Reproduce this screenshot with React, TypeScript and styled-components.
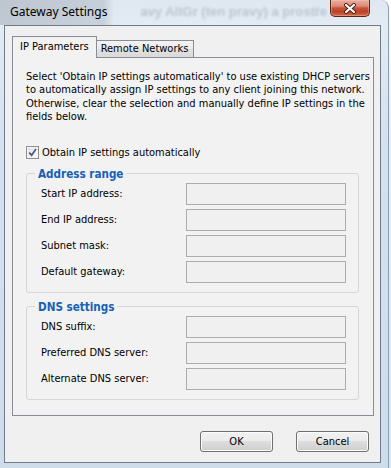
import React from "react";
import styled, { createGlobalStyle } from "styled-components";

const UI_FONT = `"DejaVu Sans Condensed", "Liberation Sans", sans-serif`;

const GlobalStyle = createGlobalStyle`
  html, body { margin: 0; padding: 0; background: #eef3f9; }
  body { font-family: ${UI_FONT}; font-size: 11px; color: #000; }
  * { box-sizing: border-box; }
`;

const Desktop = styled.div`
  width: 391px;
  height: 468px;
  overflow: hidden;
  background: linear-gradient(180deg, #ffffff 0%, #e6eef8 25%, #dbe7f4 100%);
`;

const Window = styled.div`
  width: 389px;
  height: 468px;
  display: flex;
  flex-direction: column;
  padding: 0 7px 5px 4px;
  border-right: 1px solid #8b9db1;
  border-top-right-radius: 8px;
  background:
    linear-gradient(90deg, rgba(110, 120, 135, 0.3) 0, rgba(110, 120, 135, 0.22) 104px, rgba(110, 120, 135, 0) 114px) 0 0 / 100% 25px no-repeat,
    linear-gradient(180deg, #dfe7f0 0%, #e3ebf4 6%, #d4e1ee 30%, #cfdcea 100%);
`;

const TitleBar = styled.div`
  height: 25px;
  flex: none;
  display: flex;
  align-items: flex-start;
  padding-left: 6px;
`;

const Title = styled.div`
  font-family: "Noto Sans", "Open Sans", sans-serif;
  font-size: 12px;
  line-height: 24px;
  color: #000;
  white-space: nowrap;
`;

const GlassText = styled.div`
  flex: none;
  white-space: nowrap;
  margin-left: 33px;
  font-family: "Liberation Sans", sans-serif;
  font-weight: bold;
  font-size: 13px;
  line-height: 24px;
  color: rgba(50, 70, 100, 0.22);
  filter: blur(1.2px);
`;

const CloseButton = styled.div`
  width: 40px;
  height: 17px;
  flex: none;
  margin-left: auto;
  margin-right: 11px;
  display: flex;
  align-items: center;
  justify-content: center;
  border: 1px solid #5c2417;
  border-top: none;
  border-radius: 0 0 5px 5px;
  background: linear-gradient(180deg, #e9ad9f 0%, #dc8b79 38%, #c8543c 50%, #bb432a 72%, #d06a45 100%);
  box-shadow: inset 0 0 0 1px rgba(255, 210, 200, 0.35);
`;

const Client = styled.div`
  flex: 1;
  display: flex;
  flex-direction: column;
  border: 1px solid #6e7b8b;
  background: #f0f0f0;
  padding: 10px 6px 0 7px;
`;

const TabStrip = styled.div`
  display: flex;
  align-items: flex-end;
  height: 21px;
`;

const Tab = styled.div<{ $active?: boolean }>`
  height: ${(p) => (p.$active ? "22px" : "17px")};
  padding: ${(p) => (p.$active ? "0 7px" : "0 5px 0 4px")};
  margin-bottom: ${(p) => (p.$active ? "-1px" : "0")};
  border: 1px solid #898c95;
  border-bottom: none;
  ${(p) => (p.$active ? "" : "border-left: none;")}
  position: relative;
  z-index: ${(p) => (p.$active ? 1 : 0)};
  background: ${(p) =>
    p.$active ? "#f2f2f2" : "linear-gradient(180deg, #f3f3f3 0%, #ebebeb 50%, #e0e0e0 51%, #dadada 100%)"};
  font-size: 11px;
  line-height: ${(p) => (p.$active ? "20px" : "16px")};
  white-space: nowrap;
`;

const TabPanel = styled.div`
  border: 1px solid #898c95;
  background: #f2f2f2;
  padding: 12px 14px 15px 13px;
  display: flex;
  flex-direction: column;
`;

const Description = styled.div`
  font-size: 11px;
  line-height: 13.4px;
  white-space: nowrap;
`;

const CheckRow = styled.label`
  margin-top: 22px;
  display: flex;
  align-items: center;
  gap: 3px;
  height: 13px;
  font-size: 11px;
  line-height: 13px;
`;

const CheckBox = styled.span`
  width: 13px;
  height: 13px;
  flex: none;
  display: flex;
  align-items: center;
  justify-content: center;
  border: 1px solid #8e8f8f;
  background: linear-gradient(135deg, #dedede 0%, #f4f4f4 60%, #ffffff 100%);
  box-shadow: inset 0 0 0 1px #f4f4f4;
`;

const Group = styled.fieldset<{ $first?: boolean }>`
  margin: ${(p) => (p.$first ? "8px" : "7px")} 0 0 0;
  padding: 2px 12px 9px 14px;
  min-width: 0;
  border: 1px solid #d6d6d6;
  border-radius: 3px;
`;

const GroupTitle = styled.legend`
  margin-left: -6px;
  padding: 0 3px;
  font-family: ${UI_FONT};
  font-weight: bold;
  font-size: 11.6px;
  line-height: 14px;
  color: #1660b8;
`;

const Fields = styled.div`
  display: grid;
  grid-template-columns: 145px 1fr;
  row-gap: 4px;
  align-items: center;
`;

const FieldLabel = styled.span`
  font-size: 11px;
  line-height: 13px;
  white-space: nowrap;
`;

const FieldInput = styled.input`
  width: 100%;
  height: 22px;
  margin: 0;
  padding: 0 3px;
  border: 1px solid #adadad;
  border-radius: 0;
  background: #f0f0f0;
  font-family: ${UI_FONT};
  font-size: 11px;
  outline: none;
`;

const ButtonRow = styled.div`
  display: flex;
  justify-content: flex-end;
  gap: 23px;
  margin-top: 15px;
  padding-right: 5px;
`;

const Button = styled.button`
  width: 73px;
  height: 21px;
  margin: 0;
  padding: 0;
  border: 1px solid #707070;
  border-radius: 3px;
  background: linear-gradient(180deg, #f2f2f2 0%, #ebebeb 48%, #dddddd 50%, #cfcfcf 100%);
  box-shadow: inset 0 0 0 1px #fbfbfb;
  font-family: ${UI_FONT};
  font-size: 11px;
  color: #000;
`;

type Field = { label: string };

const addressFields: Field[] = [
  { label: "Start IP address:" },
  { label: "End IP address:" },
  { label: "Subnet mask:" },
  { label: "Default gateway:" },
];

const dnsFields: Field[] = [
  { label: "DNS suffix:" },
  { label: "Preferred DNS server:" },
  { label: "Alternate DNS server:" },
];

function FieldGrid({ fields }: { fields: Field[] }) {
  return (
    <Fields>
      {fields.map((f) => (
        <React.Fragment key={f.label}>
          <FieldLabel>{f.label}</FieldLabel>
          <FieldInput disabled aria-label={f.label} />
        </React.Fragment>
      ))}
    </Fields>
  );
}

export default function App() {
  return (
    <>
      <GlobalStyle />
      <Desktop>
        <Window>
          <TitleBar>
            <Title>Gateway Settings</Title>
            <GlassText>avy AltGr (ten pravy) a prostře</GlassText>
            <CloseButton>
              <svg width="14" height="11" viewBox="0 0 14 11">
                <path d="M3 2 L11 9 M11 2 L3 9" stroke="#4a1b10" strokeWidth="4" strokeLinecap="round" />
                <path d="M3 2 L11 9 M11 2 L3 9" stroke="#ffffff" strokeWidth="2.2" strokeLinecap="round" />
              </svg>
            </CloseButton>
          </TitleBar>
          <Client>
            <TabStrip>
              <Tab $active>IP Parameters</Tab>
              <Tab>Remote Networks</Tab>
            </TabStrip>
            <TabPanel>
              <Description>
                Select 'Obtain IP settings automatically' to use existing DHCP servers
                <br />
                to automatically assign IP settings to any client joining this network.
                <br />
                Otherwise, clear the selection and manually define IP settings in the
                <br />
                fields below.
              </Description>
              <CheckRow>
                <CheckBox>
                  <svg width="9" height="9" viewBox="0 0 9 9">
                    <path d="M1.2 4.6 L3.6 7.2 L8 1" stroke="#4b5f86" strokeWidth="1.8" fill="none" />
                  </svg>
                </CheckBox>
                Obtain IP settings automatically
              </CheckRow>
              <Group $first>
                <GroupTitle>Address range</GroupTitle>
                <FieldGrid fields={addressFields} />
              </Group>
              <Group>
                <GroupTitle>DNS settings</GroupTitle>
                <FieldGrid fields={dnsFields} />
              </Group>
            </TabPanel>
            <ButtonRow>
              <Button type="button">OK</Button>
              <Button type="button">Cancel</Button>
            </ButtonRow>
          </Client>
        </Window>
      </Desktop>
    </>
  );
}
